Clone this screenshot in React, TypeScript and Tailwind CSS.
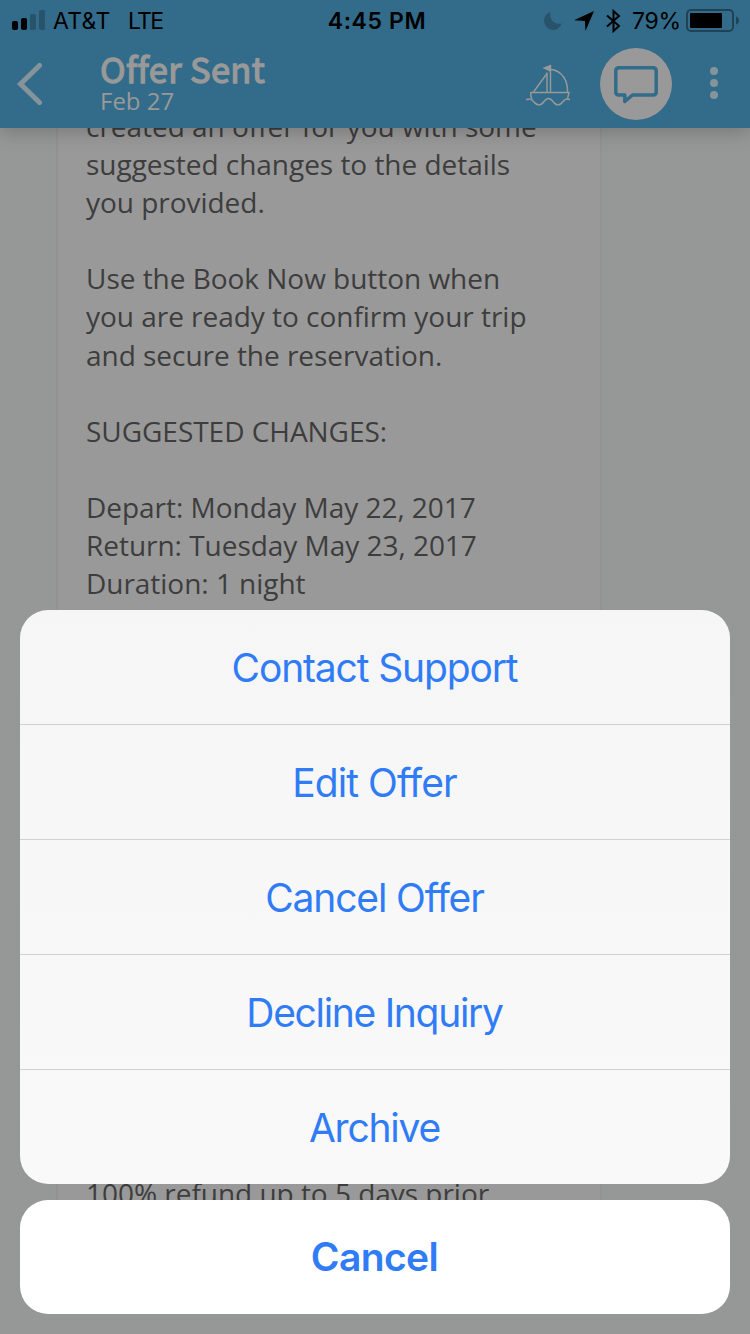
const intro = [
    "created an offer for you with some",
    "suggested changes to the details",
    "you provided.",
    "",
    "Use the Book Now button when",
    "you are ready to confirm your trip",
    "and secure the reservation.",
    "",
    "SUGGESTED CHANGES:",
    "",
    "Depart: Monday May 22, 2017",
    "Return: Tuesday May 23, 2017",
    "Duration: 1 night",
];

const policy = ["100% refund up to 5 days prior"];

const actions = [
    { label: "Contact Support", spacing: "tracking-[-1.15px]" },
    { label: "Edit Offer", spacing: "tracking-[-0.95px]" },
    { label: "Cancel Offer", spacing: "tracking-[-1.15px]" },
    { label: "Decline Inquiry", spacing: "tracking-[-1.3px]" },
    { label: "Archive", spacing: "tracking-[-1.2px]" },
];

const StatusBar = () => (
    <div className="flex h-10 items-center justify-between pr-[11px] pl-3 font-['Inter',sans-serif] text-[23px] leading-10 text-black">
        <div className="flex w-[302px] items-center pt-px">
            <svg width="33" height="20" viewBox="0 0 33 20" className="mr-2 -mt-px">
                <rect x="0" y="11" width="6" height="9" rx="2" />
                <rect x="9" y="8" width="6" height="12" rx="2" />
                <rect x="18" y="4" width="6" height="16" rx="2" fill="#28536a" />
                <rect x="27" y="0" width="6" height="20" rx="2" fill="#28536a" />
            </svg>
            <span className="w-[75px] tracking-[0.3px] whitespace-nowrap">AT&amp;T</span>
            <span className="tracking-[-1.7px]">LTE</span>
        </div>
        <span className="pt-0.5 font-semibold tracking-[0.6px] whitespace-nowrap">4:45 PM</span>
        <div className="flex w-[299px] items-center justify-end pt-0.5">
            <svg width="18" height="20" viewBox="0 0 18 20" className="mr-3">
                <path d="M6.500.8C4.800 7.800 9.600 14.500 17.700 12.400C15.800 16.800 12.700 19 9 19A8.900 8.900 0 0 1 .1 10C.1 5.700 2.500 2.300 6.500.8Z" fill="#28536a" />
            </svg>
            <svg width="20" height="20" viewBox="0 0 20 20" className="mr-3">
                <path d="M20 0L11.500 20L10.900 10L0 9.300Z" />
            </svg>
            <svg width="15" height="24" viewBox="0 0 15 24" fill="none" stroke="black" strokeWidth="2" className="mr-[11px]">
                <path d="M1 6.500L13 17L7.500 22V2L13 7L1 17.500" />
            </svg>
            <span className="mr-1.5 w-12 tracking-[-0.3px]">79%</span>
            <svg width="53" height="23" viewBox="0 0 53 23" className="-mt-0.5">
                <rect x="1" y="1" width="46" height="21" rx="4" fill="none" stroke="#1f4256" strokeWidth="2" />
                <rect x="4" y="4" width="32" height="15" rx="1" />
                <path d="M50 7.500Q53 8.500 53 11.500T50 15.500Z" fill="#1f4256" />
            </svg>
        </div>
    </div>
);

const NavBar = () => (
    <div className="flex h-22 items-center pr-8 pl-4">
        <svg width="28" height="44" viewBox="0 0 28 44" fill="none" stroke="#85949b" strokeWidth="5" strokeLinecap="round" strokeLinejoin="miter">
            <path d="M23.500 3.500L4.500 22L23.500 40.500" />
        </svg>
        <div className="ml-14 flex-1 pb-1">
            <h1 className="h-[37px] font-['Noto_Sans_CJK_SC',sans-serif] text-[34.5px] leading-[32px] font-normal tracking-[0.35px] whitespace-nowrap text-[#999] [-webkit-text-stroke:1.3px_#999]">Offer Sent</h1>
            <p className="font-['Open_Sans',sans-serif] text-[24px] leading-6 text-[#999]">Feb 27</p>
        </div>
        <svg width="46" height="44" viewBox="0 0 46 44" fill="none" stroke="#999" strokeWidth="1.400" className="mr-[29px]">
            <path d="M22 30V10.500M25.500 30V3" />
            <path d="M26 2.500L17.500 6L26 10Z" fill="#999" stroke="none" />
            <path d="M22 11.500L8.500 30M26 7.500C37 8.500 43 19 42.500 30" />
            <path d="M7 37L5.800 34V30.500H44L42.500 37" />
            <path d="M1 38C4 36 6 36.500 8.500 39.500C12 44 16 44 19 39.500C22 35.500 25 35.500 28 39.500C31 44 35 44 38 39.500C40.500 36.500 42.500 36 45 38" />
        </svg>
        <div className="flex size-[72px] items-center justify-center rounded-full bg-[#999]">
            <svg width="44" height="40" viewBox="0 0 44 40" fill="none" stroke="#336c8a" strokeWidth="3.500" strokeLinejoin="round">
                <path d="M5 3.750H39Q42.200 3.750 42.200 7V28Q42.200 31 39 31H18.500L10.800 37.500V31H5Q1.800 31 1.800 28V7Q1.800 3.750 5 3.750Z" />
            </svg>
        </div>
        <div className="ml-[38px] flex flex-col gap-1 pb-0.5">
            <span className="size-2 rounded-full bg-[#85949b]" />
            <span className="size-2 rounded-full bg-[#85949b]" />
            <span className="size-2 rounded-full bg-[#85949b]" />
        </div>
    </div>
);

const Message = ({ lines }: { lines: string[] }) => (
    <div>
        {lines.map((line, i) => (
            <p key={i} className="h-[38.1px] whitespace-nowrap">{line}</p>
        ))}
    </div>
);

const ActionSheet = () => (
    <div className="absolute inset-x-5 bottom-5 z-20 flex flex-col gap-4 font-['Inter',sans-serif] text-[39px] text-[#2f7cf6]">
        <div className="h-[574px] divide-y divide-[#d0d1d2] overflow-hidden rounded-[28px] bg-linear-to-b from-[#f6f6f6] to-[#f9f9f9]">
            {actions.map(({ label, spacing }) => (
                <button key={label} className={`flex h-[115px] w-full items-center justify-center pt-0.5 pr-px ${spacing}`}>
                    {label}
                </button>
            ))}
        </div>
        <button className="h-[114px] rounded-[28px] bg-white pr-px font-semibold tracking-[-0.6px]">Cancel</button>
    </div>
);

export default function App() {
    return (
        <div className="relative h-[1334px] w-[750px] overflow-hidden bg-[#959896]">
            <header className="relative z-10 h-32 bg-[#336c8a] shadow-[0_2px_20px_rgba(0,0,0,0.25)]">
                <StatusBar />
                <NavBar />
            </header>
            <main className="-mt-[21px] ml-14 h-[1195px] w-[546px] border-x-2 border-[#919292] bg-[#999] pl-7 font-['Open_Sans',sans-serif] text-[28px] leading-[38px] tracking-[-0.03px] text-[#3d3d3d]">
                <Message lines={intro} />
                <div className="h-[571.500px]" />
                <Message lines={policy} />
            </main>
            <ActionSheet />
        </div>
    );
}
